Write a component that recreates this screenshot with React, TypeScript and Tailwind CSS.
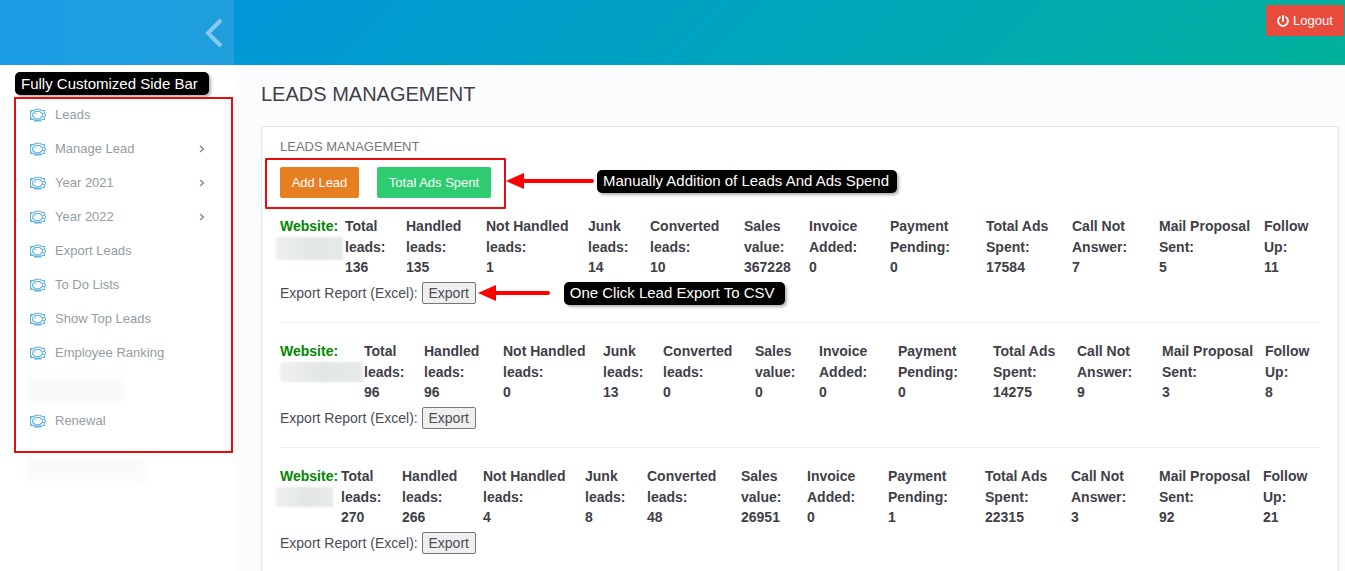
import React from "react";
import { FaPowerOff } from "react-icons/fa";

const HEADERS = [
  "Total leads:",
  "Handled leads:",
  "Not Handled leads:",
  "Junk leads:",
  "Converted leads:",
  "Sales value:",
  "Invoice Added:",
  "Payment Pending:",
  "Total Ads Spent:",
  "Call Not Answer:",
  "Mail Proposal Sent:",
  "Follow Up:",
];

type Site = { id: string; mask: string; weights: number[]; values: number[] };

const SITES: Site[] = [
  {
    id: "first",
    mask: "-ml-1 -mb-1 w-[67px] h-[23px]",
    weights: [65, 61, 80, 102, 62, 94, 65, 81, 96, 86, 87, 105, 56],
    values: [136, 135, 1, 14, 10, 367228, 0, 0, 17584, 7, 5, 11],
  },
  {
    id: "second",
    mask: "w-[83px] h-5",
    weights: [84, 60, 79, 100, 60, 92, 64, 79, 95, 84, 85, 103, 55],
    values: [96, 96, 0, 13, 0, 0, 0, 0, 14275, 9, 3, 8],
  },
  {
    id: "third",
    mask: "-ml-1 w-[57px] h-5",
    weights: [61, 61, 81, 102, 62, 94, 66, 81, 97, 86, 88, 104, 57],
    values: [270, 266, 4, 8, 48, 26951, 0, 1, 22315, 3, 92, 21],
  },
];

type Item = { label: string; nested?: boolean };

const ITEMS: Item[] = [
  { label: "Leads" },
  { label: "Manage Lead", nested: true },
  { label: "Year 2021", nested: true },
  { label: "Year 2022", nested: true },
  { label: "Export Leads" },
  { label: "To Do Lists" },
  { label: "Show Top Leads" },
  { label: "Employee Ranking" },
  { label: "" },
  { label: "Renewal" },
];

function MoneyIcon() {
  return (
    <svg viewBox="0 0 16 14" className="h-3.5 w-4 shrink-0" fill="none" stroke="#62b3dc" strokeWidth="1.1" aria-hidden="true">
      <path d="M4 2.500H.6v9H4M11.500 2.500h3v2.300M14.500 9.200v2.300h-3" />
      <path d="M4 2.500L5.500 1.300h4.500L11.500 2.500" />
      <path d="M5.300 3.500h4.400L12.300 5.700v2.800L9.700 10.700H5.300L2.700 8.500V5.700Z" />
      <path d="M4.700 6.500L6.300 5.200" strokeWidth="1" />
      <path d="M12.500 5.300h2l1 1.200v1.200l-1 1.100h-2" />
      <path d="M1.300 4.200l1-1M1.300 9.800l1 1" />
      <path d="M4 12.500h7.500" strokeWidth="2" />
    </svg>
  );
}

function Callout({ children, className }: { children: React.ReactNode; className: string }) {
  return (
    <p
      className={`flex h-[23px] shrink-0 items-center rounded-[5px] bg-black pt-px pl-1.5 text-[15px] whitespace-nowrap text-white shadow-[2px_2px_3px_rgba(0,0,0,0.3)] ${className}`}
    >
      {children}
    </p>
  );
}

function Arrow({ length }: { length: number }) {
  return (
    <svg width={length} height="18" className="shrink-0" aria-hidden="true">
      <path d={`M14 9H${length - 2}`} stroke="#f00" strokeWidth="4" strokeLinecap="round" />
      <path d="M0 9L18 1V17Z" fill="#f00" />
    </svg>
  );
}

function SiteReport({ site, callout }: { site: Site; callout?: boolean }) {
  return (
    <section className="border-b border-[#eee] pb-[18px] last:border-b-0">
      <table className="w-full table-fixed text-left text-[14px] text-[#3f4047]">
        <colgroup>
          {site.weights.map((w, i) => (
            <col key={i} style={{ width: `${(w / 1040) * 100}%` }} />
          ))}
        </colgroup>
        <thead>
          <tr className="align-top leading-[21px]">
            <th scope="col" className="p-0 whitespace-nowrap text-[#080]">
              Website:
              <span
                className={`block bg-linear-to-r from-[#eef0f0] via-[#e2e7e5] to-[#e6eae8] blur-[1px] ${site.mask}`}
              />
            </th>
            {HEADERS.map((h) => (
              <th scope="col" key={h} className="p-0">
                {h}
              </th>
            ))}
          </tr>
        </thead>
        <tbody>
          <tr className="leading-[19px]">
            <td className="p-0" />
            {site.values.map((v, i) => (
              <td key={i} className="p-0 font-bold">
                {v}
              </td>
            ))}
          </tr>
        </tbody>
      </table>
      <div className="mt-[5px] flex h-[22px] items-center text-[14px]">
        <label htmlFor={`export-${site.id}`} className="mr-1 text-[#4c4d54]">
          Export Report (Excel):
        </label>
        <button
          id={`export-${site.id}`}
          type="button"
          className="flex h-[22px] w-[54px] shrink-0 items-center justify-center rounded-[2px] border border-[#767676] bg-[#efefef] text-[#4c4d54]"
        >
          Export
        </button>
        {callout && (
          <div className="ml-0.5 flex items-center gap-3.5">
            <Arrow length={72} />
            <Callout className="w-[221px]">One Click Lead Export To CSV</Callout>
          </div>
        )}
      </div>
    </section>
  );
}

export default function App() {
  return (
    <div className="flex h-screen flex-col overflow-hidden bg-[#fafcfe] font-['Liberation_Sans',Arial,sans-serif]">
      <header className="flex h-[65px] shrink-0">
        <div className="flex w-[234px] shrink-0 items-center justify-end bg-linear-to-r from-[#1a9de6] to-[#1f9edb] pr-[11px]">
          <button type="button" aria-label="Collapse side bar" className="flex">
            <svg width="18" height="30" fill="none" stroke="#86cbed" strokeWidth="4" aria-hidden="true">
              <path d="M16 2L3 15L16 28" />
            </svg>
          </button>
        </div>
        <div className="flex flex-1 items-start justify-end bg-linear-135 from-[#0096d8] to-[#00b19b] pt-[5px] pr-px">
          <button
            type="button"
            className="flex h-[31px] w-[78px] items-center justify-center gap-1 rounded-[2px] bg-[#e94b3c] text-[13px] text-white"
          >
            <FaPowerOff className="size-3" aria-hidden="true" />
            Logout
          </button>
        </div>
      </header>
      <div className="flex min-h-0 flex-1">
        <aside className="w-[234px] shrink-0 bg-white pt-[7px] pr-px pl-3.5">
          <Callout className="ml-px w-[194px]">Fully Customized Side Bar</Callout>
          <nav className="mt-0.5 border-2 border-[#e80c0c] pt-1.5 pr-6 pb-5 pl-3.5">
            <ul className="flex flex-col gap-3.5">
              {ITEMS.map((item, i) => (
                <li key={i} className="h-5">
                  {item.label ? (
                    <a href="#" className="flex h-5 items-center text-[13px] text-[#939da2]">
                      <MoneyIcon />
                      <span className="ml-[9px] flex-1">{item.label}</span>
                      {item.nested && (
                        <svg width="6" height="8" fill="none" stroke="#7d868a" strokeWidth="1.3" className="mr-0.5" aria-hidden="true">
                          <path d="M1 1L4.500 4L1 7" />
                        </svg>
                      )}
                    </a>
                  ) : (
                    <span className="-ml-1 block h-6 w-[98px] bg-[#f8f9fa] blur-[2px]" />
                  )}
                </li>
              ))}
            </ul>
          </nav>
          <span className="mt-1 ml-3 block h-6 w-[120px] bg-[#f9fafb] blur-[2px]" />
        </aside>
        <main className="flex min-w-0 flex-1 flex-col pr-1.5 pl-[27px]">
          <h1 className="pt-4 text-[20px] leading-[26px] text-[#3f4047]">LEADS MANAGEMENT</h1>
          <div className="mt-[19px] flex-1 rounded-t-[3px] border border-b-0 border-[#e3e7ea] bg-white px-[18px] pt-2.5">
            <h2 className="text-[13px] leading-5 text-[#777]">LEADS MANAGEMENT</h2>
            <div className="-ml-[15px] flex items-center">
              <div className="mt-px flex gap-[18px] rounded-[1px] border-2 border-[#e80c0c] px-[13px] pt-[7px] pb-[9px] text-[13px] text-white">
                <button type="button" className="h-[31px] w-[79px] rounded-[2px] bg-[#e67e22]">
                  Add Lead
                </button>
                <button type="button" className="h-[31px] w-[114px] rounded-[2px] bg-[#2ecc71]">
                  Total Ads Spent
                </button>
              </div>
              <div className="mb-1 flex items-center gap-[3px]">
                <Arrow length={88} />
                <Callout className="w-[300px]">Manually Addition of Leads And Ads Spend</Callout>
              </div>
            </div>
            <div className="mt-[7px] flex flex-col gap-[18px]">
              {SITES.map((site, i) => (
                <SiteReport key={site.id} site={site} callout={i === 0} />
              ))}
            </div>
          </div>
        </main>
      </div>
    </div>
  );
}
